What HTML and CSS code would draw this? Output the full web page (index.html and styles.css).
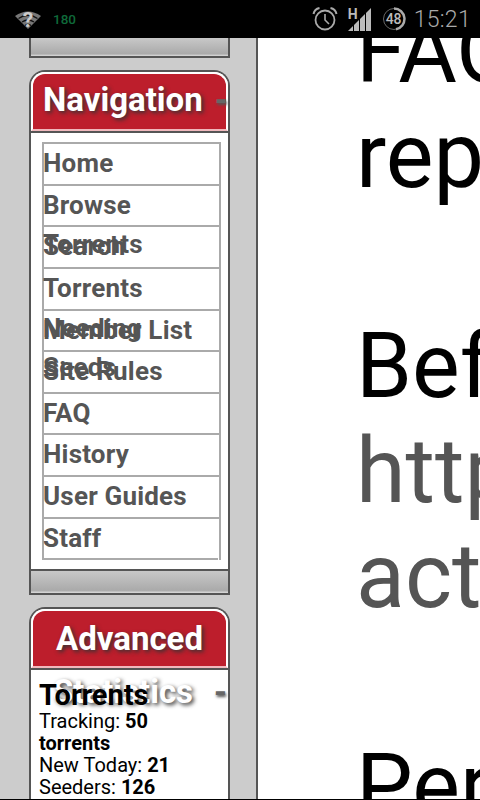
FILE: index.html
```html
<!DOCTYPE html>
<html lang="en">
<head>
<meta charset="utf-8">
<title>Tracker</title>
<link rel="stylesheet" href="styles.css">
</head>
<body>
<header class="status">
  <div class="status-left">
    <svg class="wifi" width="26" height="19" viewBox="0 0 26 19">
      <path d="M0 6 L13 19 L26 6 Q13 -3 0 6Z" fill="#777"/>
      <path d="M3.500 8.500 Q13 2 22.500 8.500 M7 12 Q13 8 19 12 M10 15.500 Q13 13.500 16 15.500" fill="none" stroke="#111" stroke-width="1.300"/>
      <text x="13" y="17" class="wifi-q">?</text>
    </svg>
    <span class="signal-num">180</span>
  </div>
  <div class="status-right">
    <svg width="26" height="26" viewBox="0 0 26 26" class="alarm">
      <circle cx="13" cy="14" r="9.500" fill="none" stroke="#aaa" stroke-width="1.800"/>
      <path d="M13 8 V14 L17 18" fill="none" stroke="#aaa" stroke-width="1.600"/>
      <path d="M1.500 8 Q2.500 3 7.500 2 M24.500 8 Q23.500 3 18.500 2" fill="none" stroke="#aaa" stroke-width="2"/>
    </svg>
    <div class="net">
      <span class="net-h">H</span>
      <svg width="24" height="24" viewBox="0 0 24 24">
        <path d="M0 24 H5 V19 Z" fill="#bbb"/>
        <path d="M6 24 H11 V13 L6 18Z" fill="#bbb"/>
        <path d="M12 24 H17 V7 L12 12Z" fill="#bbb"/>
        <path d="M18 24 H23 V1 L18 6Z" fill="#bbb"/>
      </svg>
    </div>
    <div class="batt">
      <svg width="24" height="24" viewBox="0 0 24 24">
        <circle cx="12" cy="12" r="10.500" fill="none" stroke="#666" stroke-width="1"/>
        <path d="M12 1.500 A10.500 10.500 0 0 1 14 22.300" fill="none" stroke="#aaa" stroke-width="2.500"/>
      </svg>
      <span class="batt-num">48</span>
    </div>
    <span class="clock">15:21</span>
  </div>
</header>
<div class="page">
  <aside class="sidebar">
    <div class="foot foot-top"></div>
    <section class="panel">
      <h2 class="panel-head"><span class="head-text">Navigation</span><span class="dash">-</span></h2>
      <div class="panel-body">
        <ul class="nav">
          <li><a>Home</a></li>
          <li><a>Browse</a></li>
          <li><a>Search</a><span class="ghost ghost-torrents">Torrents</span></li>
          <li><a>Torrents</a></li>
          <li><a>Member List</a><span class="ghost ghost-needing">Needing</span></li>
          <li><a>Site Rules</a><span class="ghost ghost-seeds">Seeds</span></li>
          <li><a>FAQ</a></li>
          <li><a>History</a></li>
          <li><a>User Guides</a></li>
          <li><a>Staff</a></li>
        </ul>
      </div>
      <div class="foot"></div>
    </section>
    <section class="panel panel-adv">
      <h2 class="panel-head panel-head-adv"><span class="head-text">Advanced</span></h2>
      <div class="panel-body stats">
        <span class="stats-title">Statistics</span><span class="dash stats-dash">-</span>
        <h3 class="stats-h">Torrents</h3>
        <p class="stats-p">Tracking: <b>50 torrents</b><br>New Today: <b>21</b><br>Seeders: <b>126</b></p>
      </div>
    </section>
  </aside>
  <main class="content">
    <p class="para para-first">FAQ<br>rep</p>
    <p class="para">Bef<br><a class="link">http<br>act</a></p>
    <p class="para">Per</p>
  </main>
</div>
<div class="nav-edge"></div>
</body>
</html>
```
FILE: styles.css
```css
* { box-sizing: border-box; }
html, body { margin: 0; padding: 0; height: 800px; overflow: hidden; }
body { width: 480px; font-family: Roboto, "Liberation Sans", sans-serif; background: #fff; }

.status { height: 38px; background: #000; display: flex; justify-content: space-between; align-items: center; }
.status-left { display: flex; align-items: center; padding-left: 15px; gap: 12px; }
.wifi { display: block; overflow: visible; }
.wifi-q { font: 700 21px Roboto, sans-serif; fill: #ccc; text-anchor: middle; }
.signal-num { font: 500 13.500px Roboto, sans-serif; color: #0f6a3a; }
.status-right { display: flex; align-items: center; padding-right: 9px; }
.alarm { margin-right: 10px; }
.net { position: relative; width: 24px; height: 24px; margin-right: 10px; }
.net svg { display: block; }
.net-h { position: absolute; left: 0; top: 0; font: 700 14px/14px Roboto, sans-serif; color: #bbb; }
.batt { position: relative; width: 24px; height: 24px; margin-right: 8px; }
.batt svg { display: block; }
.batt-num { position: absolute; inset: 0; text-align: center; font: 500 14px/24px Roboto, sans-serif; color: #bbb; }
.clock { font: 300 23px Roboto, sans-serif; color: #aaa; letter-spacing: 0.3px; }

.page { display: flex; height: 761px; overflow: hidden; }
.sidebar { width: 258px; flex: none; background: #ccc; border-right: 2px solid #555; padding: 0 26px 0 29px; }
.foot { height: 26px; border: 2px solid #555; background: linear-gradient(#c8c8c8, #aaa 88%, #ddd); margin: 0 -2px; }
.foot-top { height: 20px; border-top: 0; margin: 0; width: 201px; }

.panel { margin-top: 12px; width: 201px; border: 2px solid #555; border-bottom: 0; border-radius: 16px 16px 0 0; background: #fff; }
.panel-head { margin: 0; height: 59px; background: #bd1e2c; border: 2px solid #fff; border-radius: 14px 14px 0 0; border-bottom: 2px solid #f0b8bc; color: #fff; font: 700 33px/52px Roboto, sans-serif; padding-left: 10px; display: flex; }
.head-text { text-shadow: 2px 2px 4px #333; }
.dash { color: #666; font-weight: 700; margin-left: 12px; text-shadow: 1px 2px 3px #555; }
.panel-body { border-top: 2px solid #555; background: #fff; }
.nav { list-style: none; margin: 0; padding: 9.200px 7px 9.800px 11px; }
.nav li { position: relative; height: 41.600px; border: 2px solid #aaa; border-bottom-width: 0; font: 700 26px/38px Roboto, sans-serif; letter-spacing: 0.200px; color: #555; white-space: nowrap; text-indent: -1px; }
.nav li:last-child { height: 43px; }
.nav li:last-child::after { content: ""; position: absolute; left: -2px; right: 1px; bottom: 0; height: 2px; background: #aaa; }
.nav a { color: #555; }
.ghost { position: absolute; left: 0; }
.ghost-torrents { top: -2px; }
.ghost-needing { top: -2px; }
.ghost-seeds { top: -4px; }

.panel-head-adv { display: block; text-align: center; padding: 0; line-height: 55px; }
.stats { position: relative; padding: 10px 8px; height: 200px; }
.stats-title { position: absolute; left: 22px; top: 2px; font: 700 33px Roboto, sans-serif; color: #fff; text-shadow: 2px 2px 4px #333; }
.stats-dash { position: absolute; left: 183px; top: 2px; font-size: 33px; margin: 0; }
.stats-h { position: relative; margin: 0; font: 700 29px/31px Roboto, sans-serif; color: #000; }
.stats-p { margin: 0; font: 400 20px/21.800px Roboto, sans-serif; color: #000; }

.content { flex: 1; padding: 0 0 0 98px; min-width: 0; overflow: hidden; }
.para { margin: 0 0 105px; font: 400 90px/105px Roboto, sans-serif; color: #000; white-space: nowrap; }
.para-first { margin-top: -39px; }
.link { color: #555; }
.nav-edge { height: 1px; background: #000; }
```
